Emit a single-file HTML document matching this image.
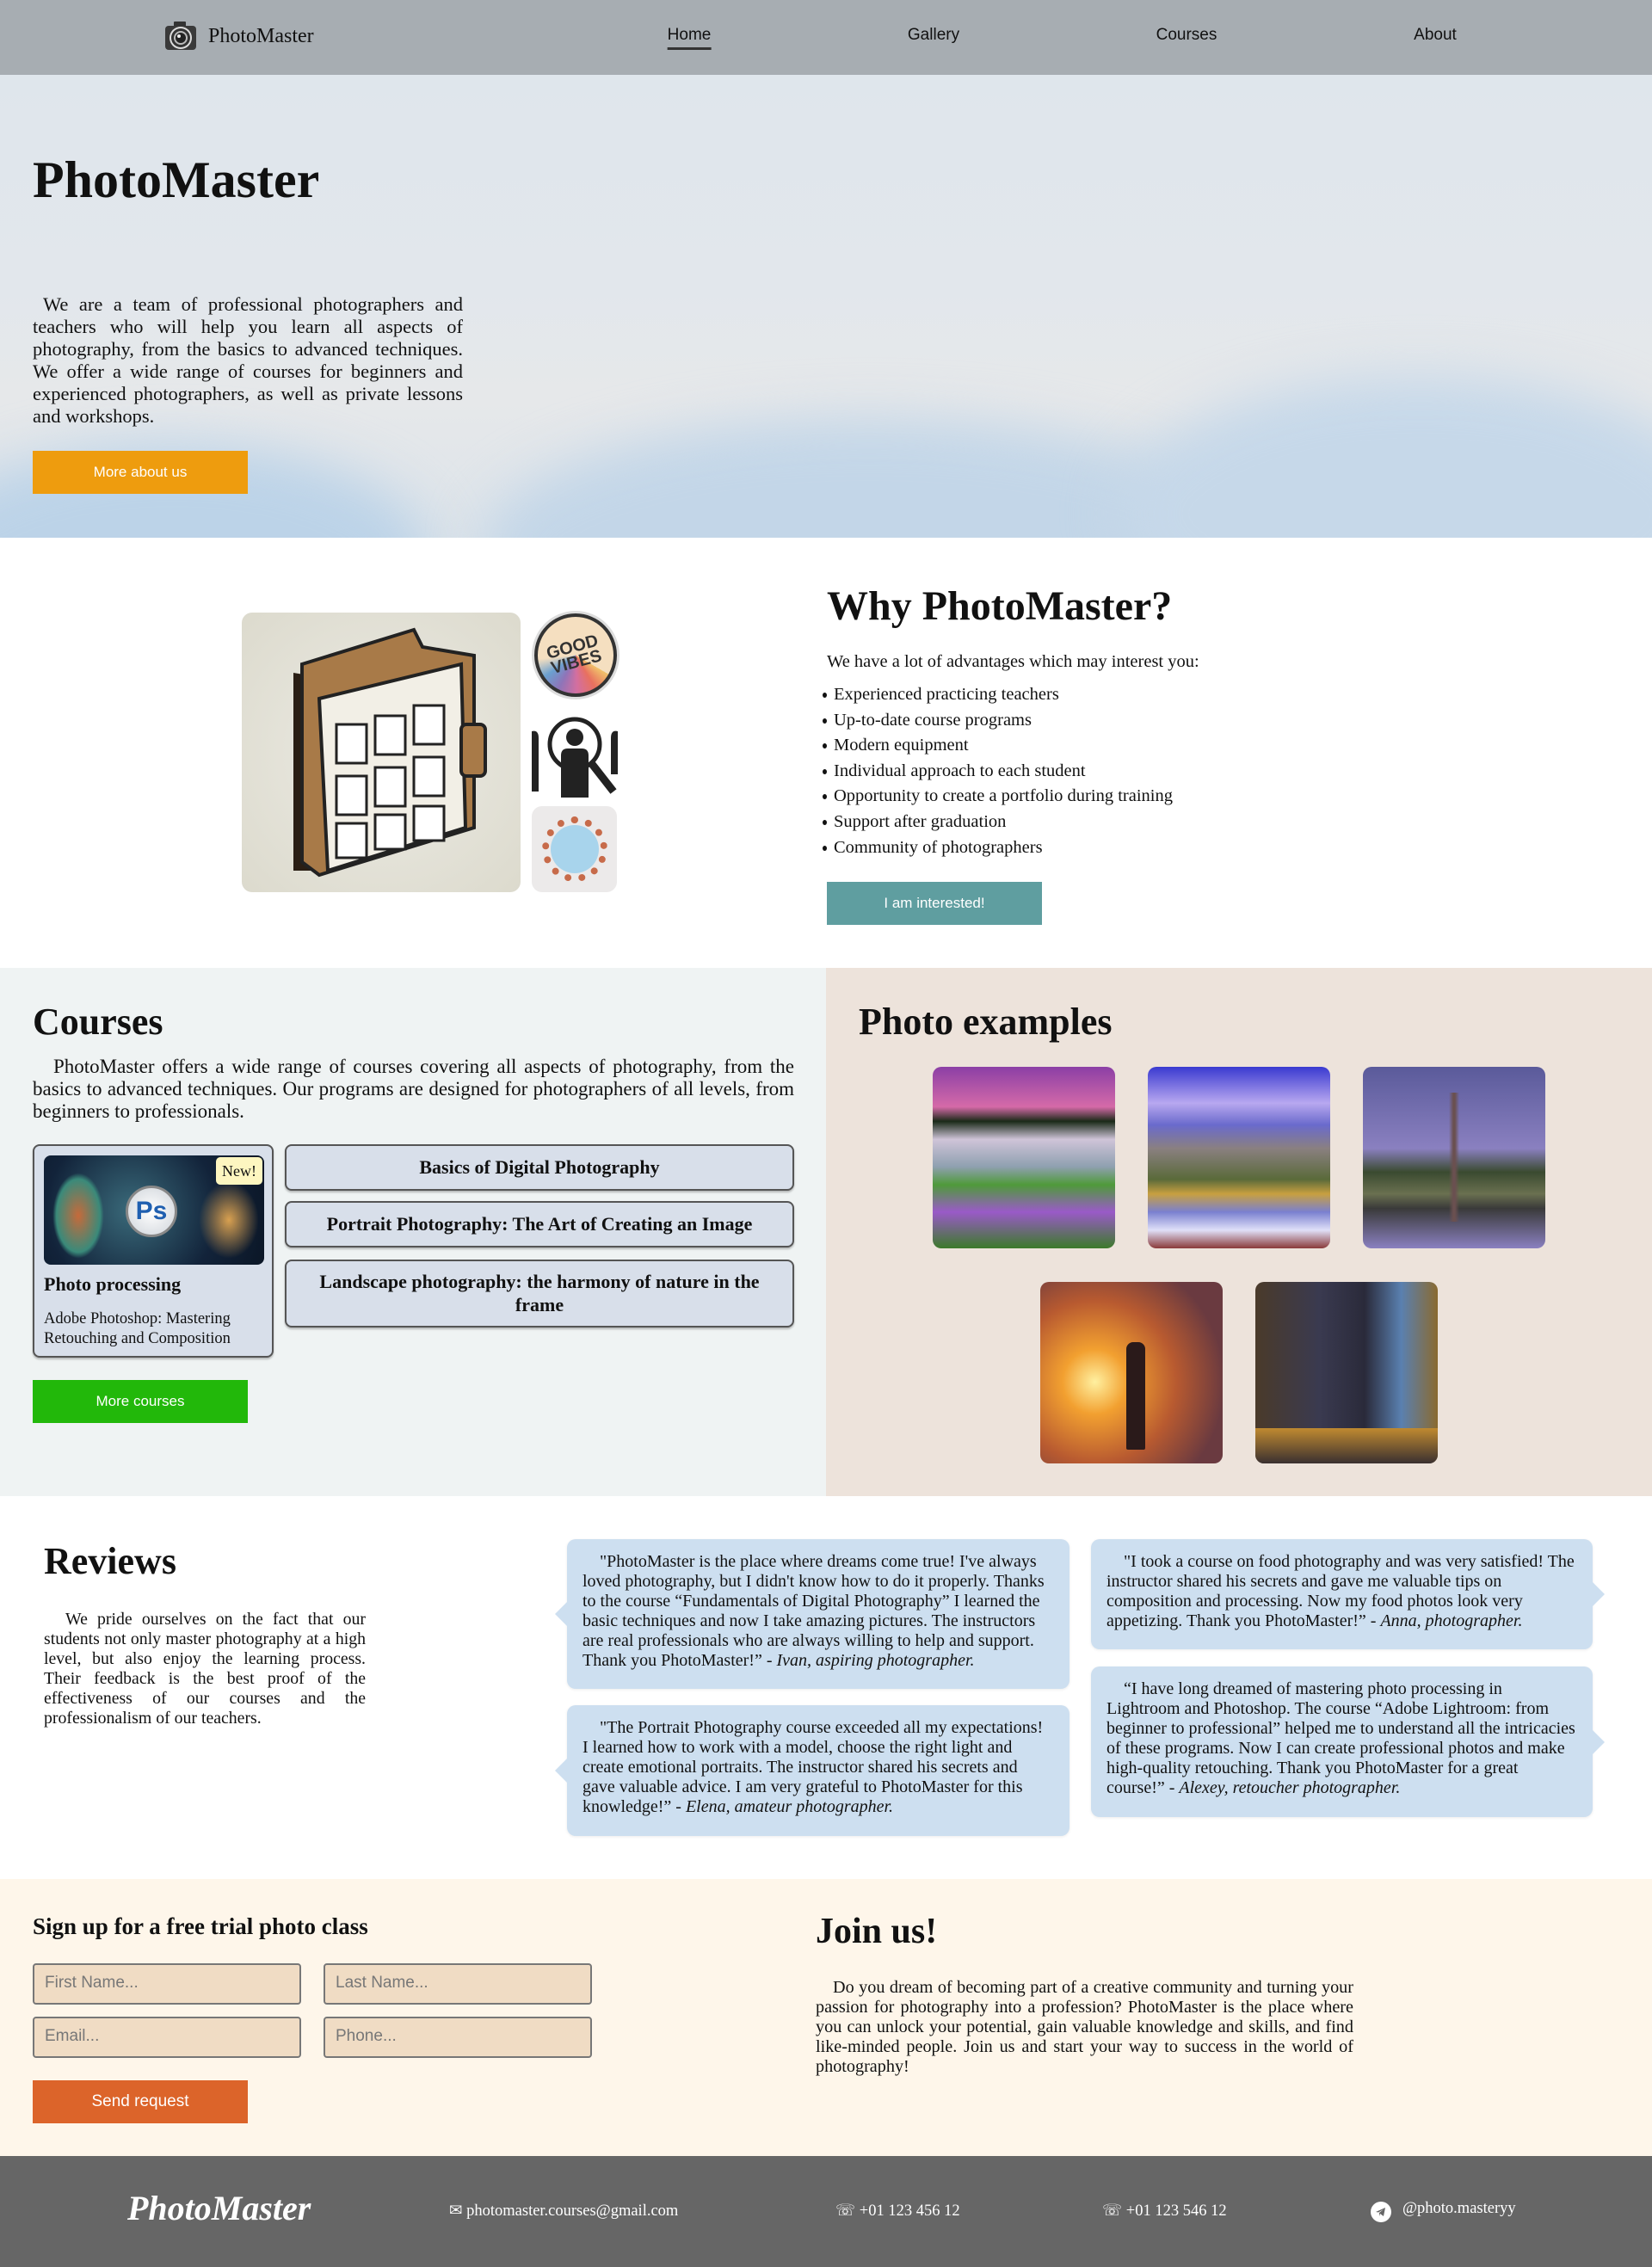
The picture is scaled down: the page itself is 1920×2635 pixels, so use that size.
<!DOCTYPE html>
<html><head><meta charset="utf-8">
<style>
*{margin:0;padding:0;box-sizing:border-box}
body{width:1920px;height:2635px;position:relative;font-family:"Liberation Serif",serif;color:#111;background:#fff;overflow:hidden}
.a{position:absolute}
nav{position:absolute;left:0;top:0;width:1920px;height:87px;background:#a7adb2;z-index:2}
.nl{position:absolute;top:30px;font-family:"Liberation Sans",sans-serif;font-size:19px;color:#111;transform:translateX(-50%)}
.hero{left:0;top:87px;width:1920px;height:538px;overflow:hidden;
background:linear-gradient(180deg,#dfe6ec 0%,#e2e7ec 45%,#e6e8ea 70%,#dde4ea 100%)}
.blob{position:absolute;border-radius:50%;filter:blur(30px)}
h1,h2{font-weight:bold}
.btn{position:absolute;width:250px;height:50px;color:#fff;font-family:"Liberation Sans",sans-serif;font-size:17px;text-align:center;line-height:50px}
p.j{text-align:justify;text-indent:12px}
ul{list-style:none}
ul li{position:relative;padding-left:13px;height:29.6px;font-size:20.5px}
ul li:before{content:"";position:absolute;left:0;top:9px;width:5px;height:6px;border-radius:50%;background:#111}
.cbox{position:absolute;left:331px;width:592px;border:2px solid #555;border-radius:8px;background:#d8dfea;font-weight:bold;font-size:22px;text-align:center;box-shadow:0 2px 2px rgba(0,0,0,.25)}
.ph{position:absolute;width:212px;height:211px;border-radius:10px;overflow:hidden}
.rv{position:absolute;background:#cddff0;border-radius:10px;padding:15px 20px 14px 18px;font-size:20px;line-height:23px;box-shadow:0 1px 3px rgba(0,0,0,.08)}
.rv p{text-indent:20px}
.rv:before{content:"";position:absolute;top:50%;margin-top:-14px;border:14px solid transparent}
.rl:before{left:-14px;border-left:0;border-right-color:#cddff0}
.rr:before{right:-14px;border-right:0;border-left-color:#cddff0}
.inp{position:absolute;width:312px;height:48px;background:#f0dcc4;border:2px solid #777;border-radius:4px;font-family:"Liberation Sans",sans-serif;font-size:19px;color:#777;padding:10px 12px}
.ft{position:absolute;top:2559px;color:#fff;font-size:18.5px}
</style></head><body>

<nav>
<svg class="a" style="left:190px;top:24px" width="40" height="37" viewBox="0 0 40 37">
<rect x="12" y="1" width="14" height="6" rx="1" fill="#333"/>
<rect x="2" y="6" width="36" height="28" rx="4" fill="#3a3a3a"/>
<circle cx="20" cy="20" r="13" fill="#ddd"/><circle cx="20" cy="20" r="11" fill="#333"/>
<circle cx="20" cy="20" r="8" fill="#bbb"/><circle cx="20" cy="20" r="6" fill="#222"/><circle cx="18" cy="18" r="2" fill="#eee"/>
</svg>
<div class="a" style="left:242px;top:29px;font-family:'Liberation Serif',serif;font-size:24px;color:#111">PhotoMaster</div>
<div class="nl" style="left:801px">Home<div style="height:3px;background:#333;margin-top:3px"></div></div>
<div class="nl" style="left:1085px">Gallery</div>
<div class="nl" style="left:1379px">Courses</div>
<div class="nl" style="left:1668px">About</div>
</nav>

<div class="a hero">
<div class="blob" style="left:-100px;top:430px;width:600px;height:260px;background:#bcd3e8"></div>
<div class="blob" style="left:560px;top:400px;width:900px;height:300px;background:#c3d6e8"></div>
<div class="blob" style="left:1300px;top:350px;width:700px;height:320px;background:#c6d8e9"></div>
<h1 class="a" style="left:38px;top:88px;font-size:60px">PhotoMaster</h1>
<p class="a j" style="left:38px;top:254px;width:500px;font-size:22.5px;line-height:26px">We are a team of professional photographers and teachers who will help you learn all aspects of photography, from the basics to advanced techniques. We offer a wide range of courses for beginners and experienced photographers, as well as private lessons and workshops.</p>
<div class="btn" style="left:38px;top:437px;background:#ee9c0e">More about us</div>
</div>

<!-- Why -->
<div class="a" style="left:281px;top:712px;width:324px;height:325px;border-radius:12px;background:radial-gradient(circle at 50% 50%,#ecebe4,#dcdacd);overflow:hidden">
<svg width="324" height="325" viewBox="0 0 324 325">
<path d="M60 70 L60 300 L90 300 L90 75 Z" fill="#2a1e14"/>
<path d="M70 60 L200 20 L210 40 L270 50 L270 250 L90 305 L70 290 Z" fill="#a87a48" stroke="#222" stroke-width="4"/>
<path d="M90 100 L255 60 L260 250 L100 300 Z" fill="#f2efe6" stroke="#222" stroke-width="4"/>
<g fill="#fff" stroke="#222" stroke-width="3">
<rect x="110" y="130" width="35" height="45"/><rect x="155" y="120" width="35" height="45"/><rect x="200" y="108" width="35" height="45"/>
<rect x="110" y="190" width="35" height="45"/><rect x="155" y="180" width="35" height="45"/><rect x="200" y="168" width="35" height="45"/>
<rect x="110" y="245" width="35" height="40"/><rect x="155" y="235" width="35" height="40"/><rect x="200" y="225" width="35" height="40"/></g>
<rect x="255" y="130" width="28" height="60" rx="6" fill="#a87a48" stroke="#222" stroke-width="4"/>
</svg></div>
<div class="a" style="left:621px;top:713px;width:96px;height:97px;border-radius:50%;background:conic-gradient(from 120deg,#f1c36b,#e8705f,#d36fa0,#8f74b8,#6aa0d0,#f5dfc0 40%,#f5dfc0);border:4px solid #333;box-shadow:0 0 0 3px #ddd"><div class="a" style="left:12px;top:26px;font:bold 20px 'Liberation Sans',sans-serif;color:#333;transform:rotate(-15deg);text-align:center;line-height:18px">GOOD<br>VIBES</div></div>
<svg class="a" style="left:618px;top:830px" width="100" height="97" viewBox="0 0 100 97">
<circle cx="50" cy="35" r="29" fill="none" stroke="#222" stroke-width="5"/>
<circle cx="50" cy="27" r="10" fill="#222"/><path d="M34 48 Q34 40 42 40 L58 40 Q66 40 66 48 L66 97 L34 97 Z" fill="#222"/>
<path d="M70 58 L95 90" stroke="#222" stroke-width="9"/>
<path d="M0 20 Q8 18 8 28 L8 90 L0 90Z M100 20 Q92 18 92 28 L92 70 L100 70Z" fill="#222"/>
</svg>
<div class="a" style="left:618px;top:937px;width:99px;height:100px;border-radius:12px;background:#eceaea">
<div class="a" style="left:12px;top:12px;width:76px;height:76px;border-radius:50%;border:8px dotted #c76b4a"></div>
<div class="a" style="left:22px;top:22px;width:56px;height:56px;border-radius:50%;background:#a8d4ec"></div></div>

<h2 class="a" style="left:961px;top:677px;font-size:48px">Why PhotoMaster?</h2>
<div class="a" style="left:961px;top:758px;font-size:20.5px">We have a lot of advantages which may interest you:</div>
<ul class="a" style="left:956px;top:796px">
<li>Experienced practicing teachers</li><li>Up-to-date course programs</li><li>Modern equipment</li><li>Individual approach to each student</li><li>Opportunity to create a portfolio during training</li><li>Support after graduation</li><li>Community of photographers</li></ul>
<div class="btn" style="left:961px;top:1025px;background:#5f9ea0">I am interested!</div>

<!-- Courses -->
<div class="a" style="left:0;top:1125px;width:960px;height:614px;background:#eff3f3"></div>
<div class="a" style="left:960px;top:1125px;width:960px;height:614px;background:#ede3db"></div>
<h2 class="a" style="left:38px;top:1162px;font-size:44px">Courses</h2>
<p class="a j" style="left:38px;top:1227px;width:885px;font-size:23px;line-height:26px;text-indent:24px">PhotoMaster offers a wide range of courses covering all aspects of photography, from the basics to advanced techniques. Our programs are designed for photographers of all levels, from beginners to professionals.</p>
<div class="a" style="left:38px;top:1330px;width:280px;height:248px;border:2px solid #555;border-radius:8px;background:#d8dfea;box-shadow:0 2px 2px rgba(0,0,0,.25)">
<div class="a" style="left:11px;top:11px;width:256px;height:127px;border-radius:8px;overflow:hidden;background:radial-gradient(circle at 40% 50%,#3a6a7a,#12233a 60%,#0b1626)">
<div class="a" style="left:10px;top:20px;width:60px;height:100px;background:radial-gradient(#c66a3a,#3a8a7a 60%,transparent 70%)"></div>
<div class="a" style="left:180px;top:30px;width:70px;height:90px;background:radial-gradient(#d8a050,transparent 70%)"></div>
<div class="a" style="left:95px;top:35px;width:60px;height:60px;border-radius:50%;background:radial-gradient(#fff,#cfd4da);border:3px solid #888;font:bold 30px 'Liberation Sans',sans-serif;color:#1f5fb0;text-align:center;line-height:54px">Ps</div>
<div class="a" style="left:200px;top:2px;width:54px;height:32px;border-radius:5px;background:#fdf6c0;font-size:18px;line-height:32px;text-align:center">New!</div></div>
<div class="a" style="left:11px;top:148px;font-weight:bold;font-size:22px">Photo processing</div>
<div class="a" style="left:11px;top:190px;font-size:18.5px;line-height:23px;width:262px">Adobe Photoshop: Mastering Retouching and Composition</div></div>
<div class="cbox" style="top:1330px;height:54px;line-height:50px">Basics of Digital Photography</div>
<div class="cbox" style="top:1396px;height:54px;line-height:50px">Portrait Photography: The Art of Creating an Image</div>
<div class="cbox" style="top:1464px;height:79px;line-height:27px;padding:10px 14px 0">Landscape photography: the harmony of nature in the frame</div>
<div class="btn" style="left:38px;top:1604px;background:#22b80a">More courses</div>

<h2 class="a" style="left:998px;top:1162px;font-size:44px">Photo examples</h2>
<div class="ph" style="left:1084px;top:1240px;background:linear-gradient(180deg,#8b3fa6 0%,#d56aa8 22%,#1a2a18 30%,#cfc4d8 40%,#8fa0b0 55%,#4f9a3a 65%,#9a5ac8 80%,#3c7a2a 100%)"></div>
<div class="ph" style="left:1334px;top:1240px;background:linear-gradient(180deg,#3a3ad0 0%,#b8a8f0 20%,#6a6acc 32%,#8a8080 45%,#5a6a3a 62%,#c8a040 70%,#7a80d0 80%,#e0e0f8 90%,#8a3a3a 100%)"></div>
<div class="ph" style="left:1584px;top:1240px;background:linear-gradient(180deg,#5a5a9a 0%,#8a80c0 45%,#3a4a30 58%,#6a7050 70%,#3a3a3a 78%,#8a80c0 100%)">
<div class="a" style="left:96px;top:30px;width:20px;height:150px;background:linear-gradient(90deg,transparent 20%,#6a5050 45%,#6a5050 55%,transparent 80%)"></div></div>
<div class="ph" style="left:1209px;top:1490px;background:radial-gradient(circle at 30% 55%,#fff0a0 0%,#f2a030 20%,#b85a30 50%,#6a3a40 80%),#7a4a3a">
<div class="a" style="left:100px;top:70px;width:22px;height:125px;background:#2a1a1a;border-radius:8px 8px 2px 2px"></div></div>
<div class="ph" style="left:1459px;top:1490px;background:linear-gradient(90deg,#4a3a2a 0%,#3a3a50 35%,#2a2a3a 60%,#5a80b0 80%,#8a6a30 100%)">
<div class="a" style="left:0;top:170px;width:212px;height:41px;background:linear-gradient(#c08a30,#3a3030)"></div></div>

<!-- Reviews -->
<h2 class="a" style="left:51px;top:1789px;font-size:44px">Reviews</h2>
<p class="a j" style="left:51px;top:1871px;width:374px;font-size:19.8px;line-height:23px;text-indent:25px">We pride ourselves on the fact that our students not only master photography at a high level, but also enjoy the learning process. Their feedback is the best proof of the effectiveness of our courses and the professionalism of our teachers.</p>

<div class="rv rl" style="left:659px;top:1789px;width:584px;height:174px"><p>"PhotoMaster is the place where dreams come true! I've always loved photography, but I didn't know how to do it properly. Thanks to the course “Fundamentals of Digital Photography” I learned the basic techniques and now I take amazing pictures. The instructors are real professionals who are always willing to help and support. Thank you PhotoMaster!” - <i>Ivan, aspiring photographer.</i></p></div>
<div class="rv rl" style="left:659px;top:1982px;width:584px;height:152px"><p>"The Portrait Photography course exceeded all my expectations! I learned how to work with a model, choose the right light and create emotional portraits. The instructor shared his secrets and gave valuable advice. I am very grateful to PhotoMaster for this knowledge!” - <i>Elena, amateur photographer.</i></p></div>
<div class="rv rr" style="left:1268px;top:1789px;width:583px;height:128px"><p>"I took a course on food photography and was very satisfied! The instructor shared his secrets and gave me valuable tips on composition and processing. Now my food photos look very appetizing. Thank you PhotoMaster!” - <i>Anna, photographer.</i></p></div>
<div class="rv rr" style="left:1268px;top:1937px;width:583px;height:175px"><p>“I have long dreamed of mastering photo processing in Lightroom and Photoshop. The course “Adobe Lightroom: from beginner to professional” helped me to understand all the intricacies of these programs. Now I can create professional photos and make high-quality retouching. Thank you PhotoMaster for a great course!” - <i>Alexey, retoucher photographer.</i></p></div>

<!-- Signup -->
<div class="a" style="left:0;top:2184px;width:1920px;height:322px;background:#fef6ea"></div>
<div class="a" style="left:38px;top:2224px;font-weight:bold;font-size:27px">Sign up for a free trial photo class</div>
<div class="inp" style="left:38px;top:2282px">First Name...</div>
<div class="inp" style="left:376px;top:2282px">Last Name...</div>
<div class="inp" style="left:38px;top:2344px">Email...</div>
<div class="inp" style="left:376px;top:2344px">Phone...</div>
<div class="btn" style="left:38px;top:2418px;background:#dc642a;font-size:19px">Send request</div>
<h2 class="a" style="left:948px;top:2221px;font-size:42px">Join us!</h2>
<p class="a j" style="left:948px;top:2299px;width:625px;font-size:20.2px;line-height:23px;text-indent:20px">Do you dream of becoming part of a creative community and turning your passion for photography into a profession? PhotoMaster is the place where you can unlock your potential, gain valuable knowledge and skills, and find like-minded people. Join us and start your way to success in the world of photography!</p>

<!-- Footer -->
<div class="a" style="left:0;top:2506px;width:1920px;height:129px;background:#666"></div>
<div class="a" style="left:148px;top:2543px;color:#fff;font-weight:bold;font-style:italic;font-size:40px">PhotoMaster</div>
<div class="ft" style="left:522px">✉ photomaster.courses@gmail.com</div>
<div class="ft" style="left:971px">☏ +01 123 456 12</div>
<div class="ft" style="left:1281px">☏ +01 123 546 12</div>
<div class="a" style="left:1593px;top:2559px;width:24px;height:24px;border-radius:50%;background:#fff"><svg width="24" height="24" viewBox="0 0 24 24"><path d="M6 12 L17 7 L15 17 L11 14 L10 17 L10 13 L15 9 L9 12.5 Z" fill="#666"/></svg></div>
<div class="ft" style="left:1630px;top:2557px">@photo.masteryy</div>
</body></html>
